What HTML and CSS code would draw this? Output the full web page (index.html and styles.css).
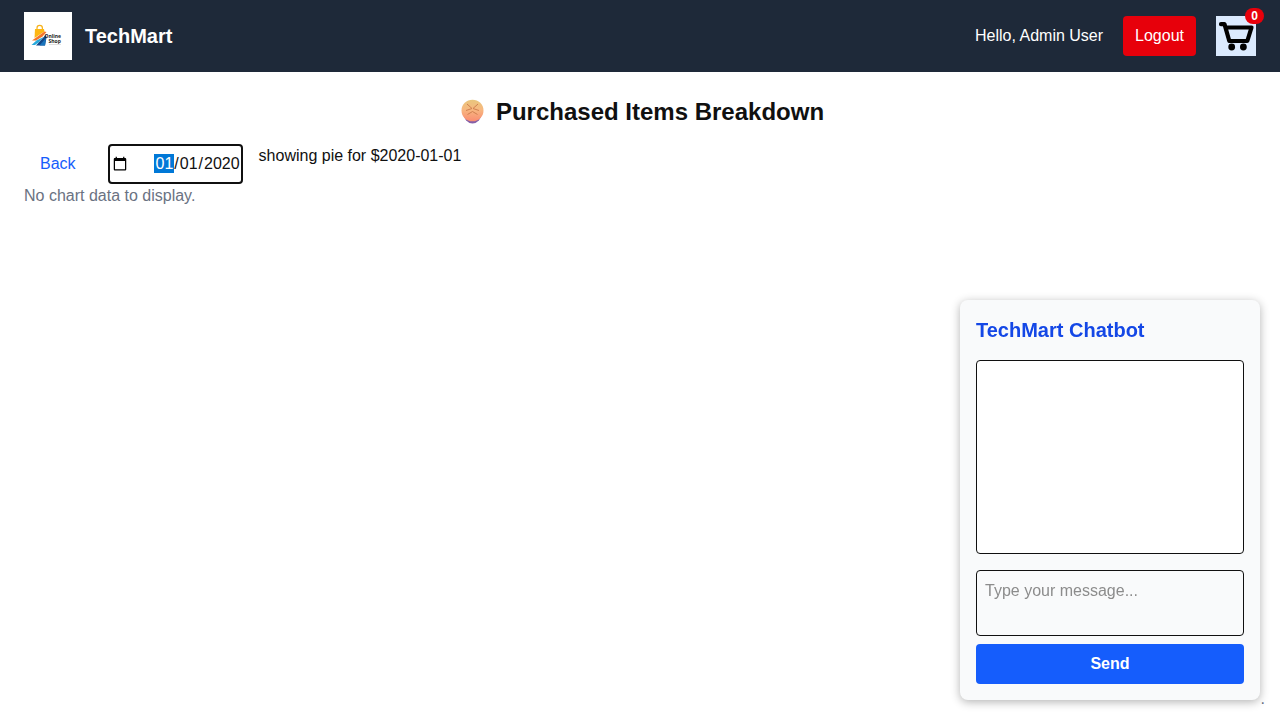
FILE: index.html
```html
<!DOCTYPE html>
<html lang="en">
<head>
<meta charset="utf-8">
<title>TechMart</title>
<link rel="stylesheet" href="styles.css">
</head>
<body>
<header class="navbar">
  <div class="brand">
    <svg class="logo" viewBox="0 0 48 48" role="img" aria-label="Online Shop">
      <rect width="48" height="48" fill="#fff"/>
      <path d="M13 19v-3a2.700 2.700 0 0 1 5.400 0v3" fill="none" stroke="#f6b21b" stroke-width="1.200"/>
      <path d="M11 17h9l.5 2.500L10.500 26z" fill="#fdb714"/>
      <path d="M8 28.500 20.500 19.500l2 .5-4 4.500-6.500 4z" fill="#f4742a"/>
      <path d="M7.500 33l5-4.500 7-3.500-5 5.500-3.500 2.500z" fill="#25a9dc"/>
      <path d="M12 33.500 22 22.500l.5 3-1.500 8z" fill="#12488a"/>
      <path d="M15.500 33.500 22 26l-1 7.500z" fill="#1b75bc"/>
      <text class="logo-text" x="20.500" y="25.500">Online</text>
      <text class="logo-text" x="24.500" y="30.500">Shop</text>
      <path d="M25 32.500h12" stroke="#ccc" stroke-width=".6"/>
    </svg>
    <span class="brand-name">TechMart</span>
  </div>
  <nav class="account">
    <span>Hello, Admin User</span>
    <button class="logout" type="button">Logout</button>
    <a class="cart" href="#" aria-label="Cart">
      <svg class="cart-icon" viewBox="0 0 40 40" aria-hidden="true">
        <path d="M5 8.200h3.500l4.800 16.800h18L35.500 11.500H9.500" fill="none" stroke="#000" stroke-width="4.200" stroke-linecap="round" stroke-linejoin="round"/>
        <circle cx="15.700" cy="31" r="3.400"/><circle cx="27.400" cy="31" r="3.400"/>
      </svg>
      <span class="badge">0</span>
    </a>
  </nav>
</header>
<main class="page">
  <h1 class="heading">
    <svg class="face" viewBox="0 0 33 28" aria-hidden="true">
      <defs><linearGradient id="skin" x1="0" y1="0" x2="0" y2="1">
        <stop offset="0" stop-color="#e8c67c"/><stop offset=".45" stop-color="#f7b880"/><stop offset="1" stop-color="#fa8d72"/>
      </linearGradient></defs>
      <ellipse cx="16.500" cy="15.500" rx="9" ry="10" fill="#8560a8"/>
      <ellipse cx="16.500" cy="12.500" rx="11" ry="10.800" fill="url(#skin)"/>
      <path d="m11 6 5 4.500-6 2M22 6l-5 4.500 6 2M11.500 16.500l5-3 5 3" fill="none" stroke="#cf8050" stroke-width="1"/>
    </svg>
    Purchased Items Breakdown
  </h1>
  <div class="toolbar">
    <button class="back" type="button">Back</button>
    <input class="date" type="date" value="2020-01-01" aria-label="Date" autofocus>
    <span>showing pie for $2020-01-01</span>
  </div>
  <p class="empty">No chart data to display.</p>
</main>
<footer class="footer">.</footer>
<section class="chatbot">
  <h2 class="chat-title">TechMart Chatbot</h2>
  <div class="messages"></div>
  <textarea class="message" rows="2" placeholder="Type your message..." aria-label="Message"></textarea>
  <button class="send" type="button">Send</button>
</section>
</body>
</html>
```
FILE: styles.css
```css
* { box-sizing: border-box; margin: 0; }
body {
  display: flex;
  flex-direction: column;
  min-height: 100vh;
  background: #fff;
  color: #101010;
  font: 16px/24px "Liberation Sans", Arial, sans-serif;
}
button, input, textarea { font: inherit; color: inherit; border: 0; }
.navbar {
  display: flex;
  align-items: center;
  justify-content: space-between;
  padding: 12px 24px;
  background: #1e2939;
  color: #fff;
}
.brand { display: flex; align-items: center; gap: 13px; }
.logo { width: 48px; height: 48px; }
.logo-text { font: bold 5px "Open Sans", sans-serif; fill: #222; }
.brand-name { font-size: 20px; line-height: 28px; font-weight: bold; }
.account { display: flex; align-items: center; gap: 20px; }
.logout { padding: 8px 12px; border-radius: 4px; background: #e7000b; color: #fff; }
.cart { position: relative; display: block; background: #dbeafe; color: #fff; text-decoration: none; }
.cart-icon { display: block; width: 40px; height: 40px; }
.badge {
  position: absolute;
  top: -8px;
  right: -8px;
  padding: 0 6px;
  border-radius: 10px;
  background: #e7000b;
  font-size: 12px;
  line-height: 16px;
  font-weight: bold;
}
.page { flex: 1; padding: 24px; }
.heading {
  display: flex;
  align-items: center;
  justify-content: center;
  gap: 7px;
  margin-bottom: 16px;
  font-size: 24px;
  line-height: 32px;
}
.face { width: 33px; height: 28px; }
.toolbar { display: flex; gap: 16px; }
.back { padding: 8px 16px; background: none; color: #155dfc; }
.date {
  width: 135px;
  height: 40px;
  padding: 0;
  border: 2px solid #101010;
  border-radius: 4px;
  background: #fff;
  outline: 0;
}
.date::-webkit-calendar-picker-indicator { order: -1; margin: 0; }
.date::-webkit-datetime-edit { padding: 0; text-align: right; }
.date::-webkit-datetime-edit-month-field { background: #0078d7; color: #fff; }
.empty { color: #6a7282; }
.footer { padding: 0 15px 9px; color: #6a7282; text-align: right; }
.chatbot {
  position: fixed;
  right: 20px;
  bottom: 20px;
  display: flex;
  flex-direction: column;
  width: 300px;
  padding: 16px;
  border-radius: 8px;
  background: #f9fafb;
  box-shadow: 0 2px 10px rgba(0, 0, 0, .3);
}
.chat-title { margin-bottom: 16px; color: #1447e6; font-size: 20px; line-height: 28px; }
.messages { height: 194px; margin-bottom: 16px; border: 1px solid #101010; border-radius: 4px; background: #fff; }
.message {
  display: block;
  width: 100%;
  margin-bottom: 8px;
  padding: 8px;
  border: 1px solid #101010;
  border-radius: 4px;
  background: transparent;
  resize: none;
}
.message::placeholder { color: #8c8c8c; }
.send { padding: 8px 16px; border-radius: 4px; background: #155dfc; color: #fff; font-weight: bold; }
```
